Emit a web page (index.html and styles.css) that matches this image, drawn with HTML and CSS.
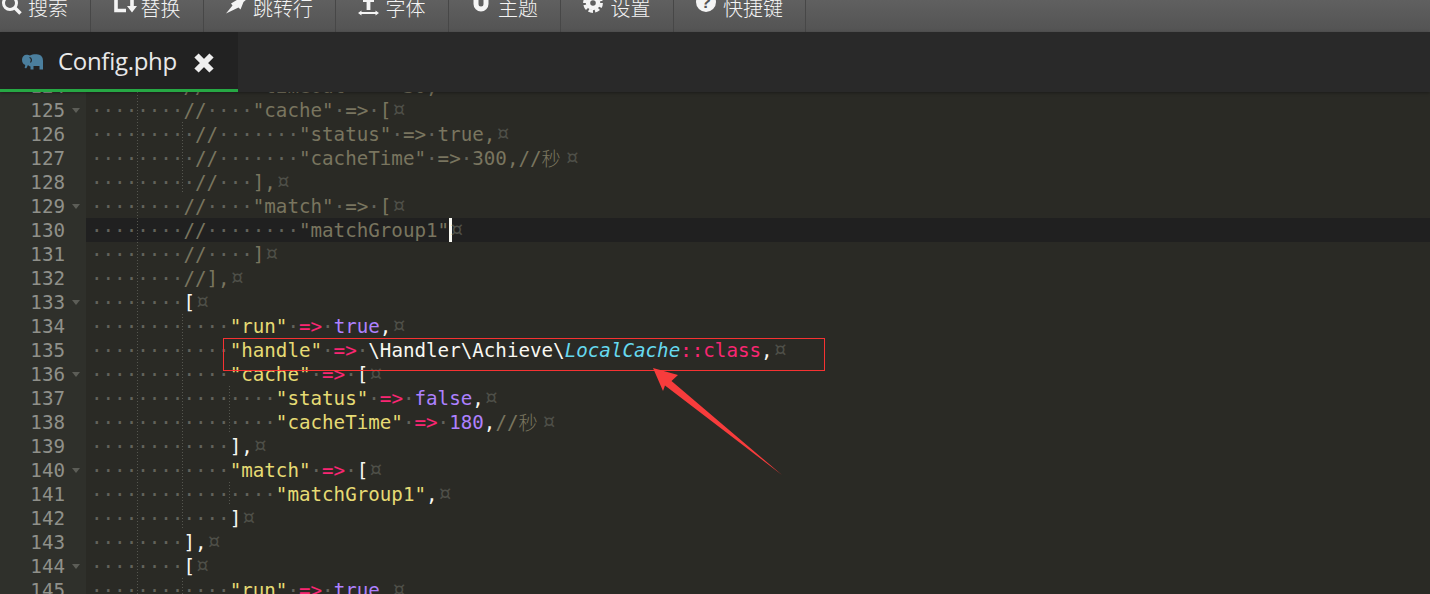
FILE: index.html
```html
<!DOCTYPE html>
<html lang="zh">
<head>
<meta charset="utf-8">
<title>Config.php</title>
<link rel="stylesheet" href="styles.css">
</head>
<body>
<div class="app">
  <nav class="toolbar">
    <div class="tool"><svg class="ico" viewBox="0 0 24 22"><circle class="st" cx="9" cy="7" r="6.5" stroke-width="3"/><path class="st" d="M13.5 11.5 19.5 17.5" stroke-width="3.6"/></svg><span>搜索</span></div>
    <div class="tool"><svg class="ico" viewBox="0 0 24 22"><path class="st" d="M3 0V14.5H13" stroke-width="3.6"/><path class="fl" d="M17.2 0H20.8V10H24L19 16.5 14 10H17.2Z"/></svg><span>替换</span></div>
    <div class="tool"><svg class="ico" viewBox="0 0 24 22"><path class="fl" d="M0 17.5 6.5 9.5 5 7.5 12.5 3 15 0H19L21 3 17.5 6 14.5 13.5 12.5 11.5Z"/></svg><span>跳转行</span></div>
    <div class="tool"><svg class="ico" viewBox="0 0 24 22"><path class="fl" d="M5 3H16V6H12.4V14H8.6V6H5ZM0 17 3.5 14.5V16H17.5V14.5L21 17 17.5 19.5V18H3.5V19.5Z"/></svg><span>字体</span></div>
    <div class="tool"><svg class="ico" viewBox="0 0 24 22"><path class="st" d="M5 0V8A5 5 0 0 0 15 8V0" stroke-width="5"/></svg><span>主题</span></div>
    <div class="tool"><svg class="ico" viewBox="0 0 24 22"><circle class="st" cx="10" cy="7" r="5" stroke-width="4.4"/><circle class="st" cx="10" cy="7" r="8.3" stroke-width="3.2" stroke-dasharray="4.4 2.1" stroke-linecap="butt"/></svg><span>设置</span></div>
    <div class="tool"><svg class="ico" viewBox="0 0 24 22"><circle class="fl" cx="10" cy="6" r="10"/><text class="qm" x="10" y="12" text-anchor="middle">?</text></svg><span>快捷键</span></div>
  </nav>
  <header class="tabbar">
    <div class="tab">
      <svg class="php" viewBox="0 0 21 17"><path class="php-f" d="M8 1.5C10 .5 13 0 16 .5 19.5 1 21 3.500 21 7V15.500H17.500V12H11.500V15.500H8.500V12.500C7 12 6.500 11.500 6 11 5.500 12 5 13.500 4 14.500L2.500 13.500C3 12.500 3.500 11.500 3 10.800 1.500 10.500 0 8.500 0 5.800 0 2.800 2 .8 4.500 .8 6 .8 7 1 8 1.500Z"/><path class="php-g" d="M7.500 3.500C9.500 4 10 6.500 8.500 8.500" /></svg>
      <span class="tabname">Config.php</span>
      <svg class="close" viewBox="0 0 20 20"><path d="M2.500 2.500 17.500 17.500M17.500 2.500 2.500 17.500"/></svg>
    </div>
  </header>
  <main class="editor">
    <div class="rows">
      <div class="row"><div class="num"><span class="n">124</span></div><div class="code g1"><span class="d">········</span><span class="c">//</span><span class="d">····</span><span class="c">"timeout"</span><span class="d">·</span><span class="c">=&gt;</span><span class="d">·</span><span class="c">30,</span><span class="p">¤</span></div></div>
      <div class="row"><div class="num"><span class="n">125</span><span class="f"></span></div><div class="code g1"><span class="d">········</span><span class="c">//</span><span class="d">····</span><span class="c">"cache"</span><span class="d">·</span><span class="c">=&gt;</span><span class="d">·</span><span class="c">[</span><span class="p">¤</span></div></div>
      <div class="row"><div class="num"><span class="n">126</span></div><div class="code g2"><span class="d">·········</span><span class="c">//</span><span class="d">·······</span><span class="c">"status"</span><span class="d">·</span><span class="c">=&gt;</span><span class="d">·</span><span class="c">true,</span><span class="p">¤</span></div></div>
      <div class="row"><div class="num"><span class="n">127</span></div><div class="code g2"><span class="d">·········</span><span class="c">//</span><span class="d">·······</span><span class="c">"cacheTime"</span><span class="d">·</span><span class="c">=&gt;</span><span class="d">·</span><span class="c">300,//</span><span class="c cjk">秒</span><span class="p">¤</span></div></div>
      <div class="row"><div class="num"><span class="n">128</span></div><div class="code g2"><span class="d">·········</span><span class="c">//</span><span class="d">···</span><span class="c">],</span><span class="p">¤</span></div></div>
      <div class="row"><div class="num"><span class="n">129</span><span class="f"></span></div><div class="code g1"><span class="d">········</span><span class="c">//</span><span class="d">····</span><span class="c">"match"</span><span class="d">·</span><span class="c">=&gt;</span><span class="d">·</span><span class="c">[</span><span class="p">¤</span></div></div>
      <div class="row"><div class="num"><span class="n">130</span></div><div class="code g1 active"><span class="d">········</span><span class="c">//</span><span class="d">········</span><span class="c">"matchGroup1"</span><span class="caret"></span><span class="p">¤</span></div></div>
      <div class="row"><div class="num"><span class="n">131</span></div><div class="code g1"><span class="d">········</span><span class="c">//</span><span class="d">····</span><span class="c">]</span><span class="p">¤</span></div></div>
      <div class="row"><div class="num"><span class="n">132</span></div><div class="code g1"><span class="d">········</span><span class="c">//],</span><span class="p">¤</span></div></div>
      <div class="row"><div class="num"><span class="n">133</span><span class="f"></span></div><div class="code g1"><span class="d">········</span><span class="w">[</span><span class="p">¤</span></div></div>
      <div class="row"><div class="num"><span class="n">134</span></div><div class="code g2"><span class="d">············</span><span class="s">"run"</span><span class="d">·</span><span class="o">=&gt;</span><span class="d">·</span><span class="b">true</span><span class="w">,</span><span class="p">¤</span></div></div>
      <div class="row"><div class="num"><span class="n">135</span></div><div class="code g2"><span class="d">············</span><span class="s">"handle"</span><span class="d">·</span><span class="o">=&gt;</span><span class="d">·</span><span class="w">\Handler\Achieve\</span><span class="k">LocalCache</span><span class="o">::class</span><span class="w">,</span><span class="p">¤</span></div></div>
      <div class="row"><div class="num"><span class="n">136</span><span class="f"></span></div><div class="code g2"><span class="d">············</span><span class="s">"cache"</span><span class="d">·</span><span class="o">=&gt;</span><span class="d">·</span><span class="w">[</span><span class="p">¤</span></div></div>
      <div class="row"><div class="num"><span class="n">137</span></div><div class="code g3"><span class="d">················</span><span class="s">"status"</span><span class="d">·</span><span class="o">=&gt;</span><span class="d">·</span><span class="b">false</span><span class="w">,</span><span class="p">¤</span></div></div>
      <div class="row"><div class="num"><span class="n">138</span></div><div class="code g3"><span class="d">················</span><span class="s">"cacheTime"</span><span class="d">·</span><span class="o">=&gt;</span><span class="d">·</span><span class="b">180</span><span class="w">,</span><span class="c">//</span><span class="c cjk">秒</span><span class="p">¤</span></div></div>
      <div class="row"><div class="num"><span class="n">139</span></div><div class="code g2"><span class="d">············</span><span class="w">],</span><span class="p">¤</span></div></div>
      <div class="row"><div class="num"><span class="n">140</span><span class="f"></span></div><div class="code g2"><span class="d">············</span><span class="s">"match"</span><span class="d">·</span><span class="o">=&gt;</span><span class="d">·</span><span class="w">[</span><span class="p">¤</span></div></div>
      <div class="row"><div class="num"><span class="n">141</span></div><div class="code g3"><span class="d">················</span><span class="s">"matchGroup1"</span><span class="w">,</span><span class="p">¤</span></div></div>
      <div class="row"><div class="num"><span class="n">142</span></div><div class="code g2"><span class="d">············</span><span class="w">]</span><span class="p">¤</span></div></div>
      <div class="row"><div class="num"><span class="n">143</span></div><div class="code g1"><span class="d">········</span><span class="w">],</span><span class="p">¤</span></div></div>
      <div class="row"><div class="num"><span class="n">144</span><span class="f"></span></div><div class="code g1"><span class="d">········</span><span class="w">[</span><span class="p">¤</span></div></div>
      <div class="row"><div class="num"><span class="n">145</span></div><div class="code g2"><span class="d">············</span><span class="s">"run"</span><span class="d">·</span><span class="o">=&gt;</span><span class="d">·</span><span class="b">true</span><span class="w">,</span><span class="p">¤</span></div></div>
    </div>
  </main>
  <svg class="annot" viewBox="0 0 1430 594"><rect class="annot-box" x="223.500" y="338.500" width="601" height="32"/><path class="annot-arrow" d="M653 368 678 375 671.500 381 782 475 665 385.500 663 391Z"/></svg>
</div>
</body>
</html>
```
FILE: styles.css
```css
* { box-sizing: border-box; }
html, body { margin: 0; height: 100%; overflow: hidden; background: #272822; }
.app { position: relative; display: flex; flex-direction: column; width: 1430px; height: 594px; overflow: hidden; }

.toolbar {
  display: flex; flex: none; height: 32px; padding-left: 0; overflow: hidden;
  background: linear-gradient(#606060, #535353);
  color: #f4f4f4;
  font: 20px/20px "Noto Sans CJK SC", "Liberation Sans", sans-serif;
  font-weight: 300;
}
.tool {
  display: flex; flex: none; align-items: center; gap: 3.5px;
  height: 32px; padding: 0 22px 16px; border-right: 1px solid #474747;
}
.tool:first-child { margin-left: -21.500px; }
.ico { flex: none; width: 24px; height: 22px; margin-top: -2px; overflow: visible; }
.st { fill: none; stroke: #f4f4f4; }
.fl { fill: #f4f4f4; }
.qm { fill: #555; font: bold 17px "Liberation Sans", sans-serif; }

.tabbar { position: relative; z-index: 2; display: flex; flex: none; height: 60px; background: #292929; box-shadow: 0 1px 3px rgba(0,0,0,.35); }
.tab { display: flex; align-items: center; width: 238px; height: 60px; padding: 0 0 0 22px; background: #222; border-bottom: 3px solid #26a844; }
.php { flex: none; width: 21px; height: 17px; margin-top: 4px; }
.php-f { fill: #4b7f9e; }
.php-g { fill: none; stroke: #222; stroke-width: 1.200; }
.tabname { margin: 1px 0 0 15px; color: #e8e8e8; font: 24px/32px "Open Sans", "Liberation Sans", sans-serif; letter-spacing: -.3px; }
.close { flex: none; width: 20px; height: 20px; margin: 4px 0 0 17px; }
.close path { fill: none; stroke: #eee; stroke-width: 6; }

.editor { flex: 1; min-height: 0; overflow: hidden; background: #2a2a25; }
.rows { margin-top: -18px; }
.row { display: flex; height: 24px; }
.num { display: flex; flex: none; align-items: flex-start; width: 86px; background: #2f302b; color: #8f908a; font: 19.200px/26px "DejaVu Sans Mono", monospace; }
.n { width: 65px; text-align: right; }
.f { width: 0; height: 0; margin: 10px 0 0 7px; border: 4.500px solid transparent; border-top: 5px solid #5c5d57; border-bottom: 0; }
.code {
  flex: 1; height: 24px; padding-left: 5px; white-space: pre;
  color: #f8f8f2;
  font: 19.200px/26px "DejaVu Sans Mono", monospace;
  background-repeat: no-repeat;
}
.g1 { background-image: repeating-linear-gradient(#55564f 0 1px, transparent 1px 3px); background-size: 1px 100%; background-position: 51px 0; }
.g2, .g3 { background-image: repeating-linear-gradient(#55564f 0 1px, transparent 1px 3px), repeating-linear-gradient(#55564f 0 1px, transparent 1px 3px), repeating-linear-gradient(#55564f 0 1px, transparent 1px 3px); background-size: 1px 100%; }
.g2 { background-position: 51px 0, 96px 0, -5px 0; }
.g3 { background-position: 51px 0, 96px 0, 143px 0; }
.active { background-color: #202020; }
.d { color: #62635c; }
.p { display: inline-block; width: 11.560px; color: #4e4f48; font-size: 24px; line-height: 24px; vertical-align: top; }
.c { color: #79755f; }
.s { color: #e6db74; }
.o { color: #f92672; }
.b { color: #ae81ff; }
.k { color: #66d9ef; font-style: italic; }
.w { color: #f8f8f2; }
.cjk { display: inline-block; width: 23.100px; height: 26px; vertical-align: top; font-family: "Noto Sans CJK SC", sans-serif; font-weight: 300; line-height: 24px; }
.caret { display: inline-block; width: 3px; height: 24px; margin-right: -3px; vertical-align: top; background: #f8f8f2; }

.annot { position: absolute; left: 0; top: 0; z-index: 3; width: 1430px; height: 594px; pointer-events: none; }
.annot-box { fill: none; stroke: #f63232; stroke-width: 1; }
.annot-arrow { fill: #f73c3c; }
```
